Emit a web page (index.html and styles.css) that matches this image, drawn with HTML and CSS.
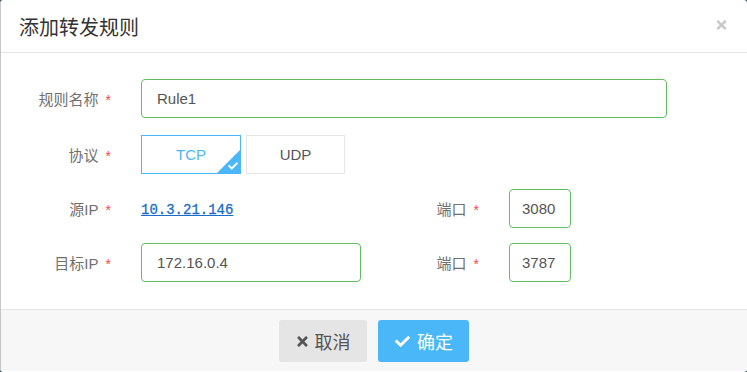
FILE: index.html
```html
<!DOCTYPE html>
<html lang="zh-CN">
<head>
    <meta charset="UTF-8">
    <meta name="viewport" content="width=device-width, initial-scale=1.0">
    <title>添加转发规则</title>
    <link rel="stylesheet" href="styles.css">
</head>
<body>

    <div class="modal">
        <div class="modal-header">
            <h4 class="modal-title">添加转发规则</h4>
            <span class="close">
                <svg width="13" height="14" viewBox="0 0 352 512"><path fill="currentColor" d="M242.72 256l100.07-100.07c12.28-12.28 12.28-32.19 0-44.48l-22.24-22.24c-12.28-12.28-32.19-12.28-44.48 0L176 189.28 75.93 89.21c-12.28-12.28-32.19-12.28-44.48 0L9.21 111.45c-12.28 12.28-12.28 32.19 0 44.48L109.28 256 9.21 356.07c-12.28 12.28-12.28 32.19 0 44.48l22.24 22.24c12.28 12.28 32.2 12.28 44.48 0L176 322.72l100.07 100.07c12.28 12.28 32.2 12.28 44.48 0l22.24-22.24c12.28-12.28 12.28-32.19 0-44.48L242.72 256z"/></svg>
            </span>
        </div>

        <form class="modal-body">
            <div class="form-row first">
                <label class="form-label">规则名称<span class="req">*</span></label>
                <input type="text" class="form-input wide" value="Rule1">
            </div>

            <div class="form-row">
                <label class="form-label">协议<span class="req">*</span></label>
                <div class="proto-group">
                    <span class="proto active">TCP
                        <span class="corner">
                            <svg width="10" height="10" viewBox="0 0 512 512"><path fill="#fff" d="M173.898 439.404l-166.4-166.4c-9.997-9.997-9.997-26.206 0-36.204l36.203-36.204c9.997-9.998 26.207-9.998 36.204 0L192 312.69 432.095 72.596c9.997-9.997 26.207-9.997 36.204 0l36.203 36.204c9.997 9.997 9.997 26.206 0 36.204l-294.4 294.401c-9.998 9.997-26.207 9.997-36.204-.001z"/></svg>
                        </span>
                    </span>
                    <span class="proto">UDP</span>
                </div>
            </div>

            <div class="form-row">
                <label class="form-label">源IP<span class="req">*</span></label>
                <div class="half"><a href="#" class="ip-link">10.3.21.146</a></div>
                <label class="form-label port-label">端口<span class="req">*</span></label>
                <div class="port-input">3080</div>
            </div>

            <div class="form-row">
                <label class="form-label">目标IP<span class="req">*</span></label>
                <input type="text" class="form-input half" value="172.16.0.4">
                <label class="form-label port-label">端口<span class="req">*</span></label>
                <div class="port-input">3787</div>
            </div>
        </form>

        <div class="modal-footer">
            <button type="button" class="btn btn-cancel">
                <svg width="13" height="15" viewBox="0 0 352 512"><path fill="currentColor" d="M242.72 256l100.07-100.07c12.28-12.28 12.28-32.19 0-44.48l-22.24-22.24c-12.28-12.28-32.19-12.28-44.48 0L176 189.28 75.93 89.21c-12.28-12.28-32.19-12.28-44.48 0L9.21 111.45c-12.28 12.28-12.28 32.19 0 44.48L109.28 256 9.21 356.07c-12.28 12.28-12.28 32.19 0 44.48l22.24 22.24c12.28 12.28 32.2 12.28 44.48 0L176 322.72l100.07 100.07c12.28 12.28 32.2 12.28 44.48 0l22.24-22.24c12.28-12.28 12.28-32.19 0-44.48L242.72 256z"/></svg>
                取消
            </button>
            <button type="button" class="btn btn-ok">
                <svg width="17" height="15" viewBox="0 0 512 512"><path fill="currentColor" d="M173.898 439.404l-166.4-166.4c-9.997-9.997-9.997-26.206 0-36.204l36.203-36.204c9.997-9.998 26.207-9.998 36.204 0L192 312.69 432.095 72.596c9.997-9.997 26.207-9.997 36.204 0l36.203 36.204c9.997 9.997 9.997 26.206 0 36.204l-294.4 294.401c-9.998 9.997-26.207 9.997-36.204-.001z"/></svg>
                确定
            </button>
        </div>
    </div>

</body>
</html>
```

FILE: styles.css
```css
body {
    margin: 0;
    background: #24495a;
    font-family: "Liberation Sans", Arial, "Noto Sans CJK SC", sans-serif;
}
.modal {
    width: 747px;
    height: 372px;
    box-sizing: border-box;
    background: white;
    border-left: 1px solid #c6c6c6;
    border-radius: 3px;
    overflow: hidden;
}
.modal-header {
    height: 52px;
    border-bottom: 1px solid #e5e5e5;
    display: flex;
    align-items: center;
    justify-content: space-between;
    padding: 0 19px 0 18px;
}
.modal-title {
    margin: 0;
    font-size: 20px;
    font-weight: normal;
    color: #333;
    font-family: "Noto Sans CJK SC", sans-serif;
}
.close {
    color: #c8c8c8;
    display: flex;
    margin-top: -2px;
}
.modal-body {
    margin: 0;
    padding: 26px 0 27px 0;
}
.form-row {
    display: flex;
    align-items: center;
    height: 39px;
    margin-top: 15px;
}
.form-row.first {
    margin-top: 0;
}
.form-row.first + .form-row {
    margin-top: 17px;
}
.form-label {
    width: 140px;
    box-sizing: border-box;
    padding-right: 30px;
    text-align: right;
    font-size: 15px;
    color: #707070;
}
.port-label {
    width: 148px;
}
.req {
    color: #f24a4a;
    font-size: 14px;
    margin-left: 7px;
}
.form-input {
    height: 39px;
    box-sizing: border-box;
    border: 1px solid #62bd62;
    border-radius: 4px;
    padding: 0 15px;
    font-size: 15px;
    color: #555;
    font-family: "Liberation Sans", Arial, sans-serif;
    outline: none;
}
.form-input.wide {
    width: 526px;
}
.half {
    width: 220px;
    box-sizing: border-box;
}
.ip-link {
    font-family: "Liberation Mono", "DejaVu Sans Mono", monospace;
    font-size: 14px;
    color: #1a6dc6;
    text-decoration: underline;
    -webkit-text-stroke: 0.3px #1a6dc6;
}
.port-input {
    width: 62px;
    height: 39px;
    box-sizing: border-box;
    border: 1px solid #62bd62;
    border-radius: 4px;
    padding: 0 0 0 12px;
    display: flex;
    align-items: center;
    font-size: 15px;
    color: #555;
}
.proto-group {
    display: flex;
    gap: 5px;
}
.proto {
    position: relative;
    width: 100px;
    height: 39px;
    box-sizing: border-box;
    border: 1px solid #e6e6e6;
    display: flex;
    align-items: center;
    justify-content: center;
    font-size: 15px;
    color: #555;
    overflow: hidden;
}
.proto + .proto {
    width: 99px;
}
.proto.active {
    border-color: #4ab8f8;
    color: #4ab8f8;
}
.corner {
    position: absolute;
    right: 0;
    bottom: 0;
    width: 0;
    height: 0;
    border-left: 23px solid transparent;
    border-bottom: 23px solid #4ab8f8;
}
.corner svg {
    position: absolute;
    left: -12px;
    top: 11px;
}
.modal-footer {
    border-top: 1px solid #e5e5e5;
    background: #f7f7f7;
    height: 62px;
    box-sizing: border-box;
    padding-top: 10px;
    display: flex;
    justify-content: center;
    gap: 11px;
}
.btn {
    height: 42px;
    border: none;
    border-radius: 3px;
    font-size: 18px;
    font-family: "Noto Sans CJK SC", sans-serif;
    display: flex;
    align-items: center;
    justify-content: center;
    gap: 6px;
    padding: 0;
    cursor: pointer;
}
.btn-cancel {
    width: 88px;
    background: #e5e5e5;
    color: #555;
}
.btn-ok {
    width: 91px;
    background: #4ab8f8;
    color: white;
}
```
